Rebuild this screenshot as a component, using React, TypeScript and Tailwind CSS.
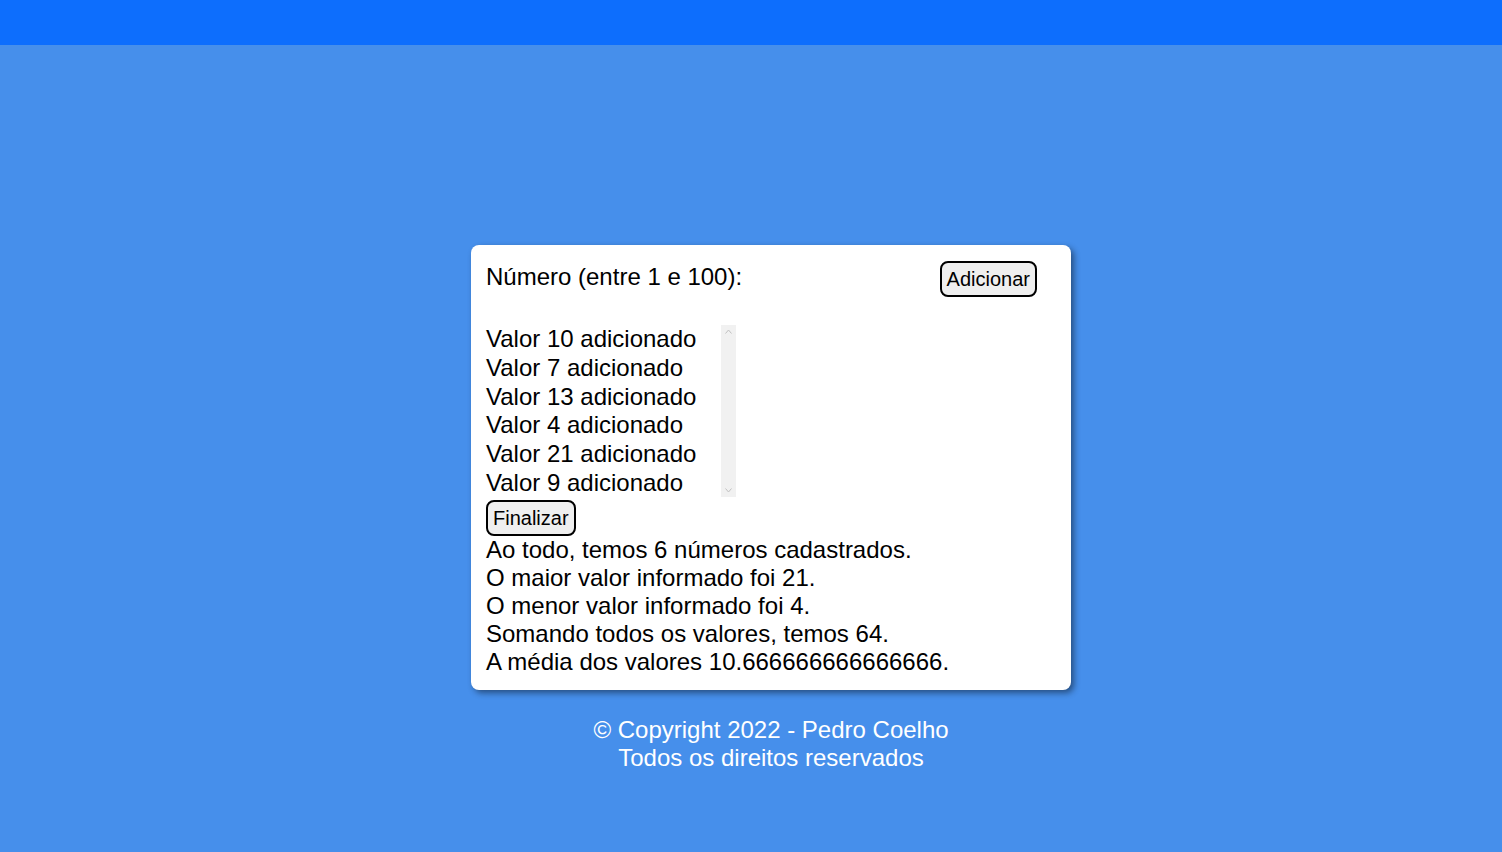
import React from "react";

const valores = [10, 7, 13, 4, 21, 9];

const Botao = ({ children }: { children: React.ReactNode }) => (
  <button className="h-[36px] px-[5px] border-2 border-black rounded-[8px] bg-[#efefef] text-[20px] leading-[24px] text-black">
    {children}
  </button>
);

export default function App() {
  const soma = valores.reduce((a, b) => a + b, 0);
  const media = soma / valores.length;

  return (
    <div className="min-h-[852px] bg-[#468feb] font-['Liberation_Sans',Arial,sans-serif] text-[24px]">
      <header className="h-[45px] bg-[#0d6efd]" />

      <main className="pt-[200px] pl-[40px]">
        <section className="w-[600px] mx-auto bg-white rounded-[8px] shadow-[3px_3px_6px_rgba(0,0,0,0.45)] px-[15px] pt-[15px] pb-[14px] text-black">
          <div className="flex items-start">
            <label className="leading-[34px]">Número (entre 1 e 100):</label>
            <div className="flex ml-auto mr-[19px] mt-[1px]">
              <Botao>Adicionar</Botao>
            </div>
          </div>

          {/* lista de valores, imita um select sem borda */}
          <div className="mt-[28px] flex w-[250px] h-[172px]">
            <div className="flex-1">
              {valores.map((v) => (
                <div key={v} className="h-[28.8px] leading-[28.8px]">
                  Valor {v} adicionado
                </div>
              ))}
            </div>
            <div className="w-[15px] bg-[#f1f1f1] flex flex-col justify-between items-center py-[2px]">
              <svg width="7" height="5" viewBox="0 0 7 5" className="mt-[2px]">
                <path d="M0.5 4.5 L3.5 1 L6.5 4.5" fill="none" stroke="#c1c1c1" strokeWidth="1" />
              </svg>
              <svg width="7" height="5" viewBox="0 0 7 5" className="mb-[2px]">
                <path d="M0.5 0.5 L3.5 4 L6.5 0.5" fill="none" stroke="#c1c1c1" strokeWidth="1" />
              </svg>
            </div>
          </div>

          <div className="flex mt-[3px]">
            <Botao>Finalizar</Botao>
          </div>

          <div className="leading-[28px]">
            <p>Ao todo, temos {valores.length} números cadastrados.</p>
            <p>O maior valor informado foi {Math.max(...valores)}.</p>
            <p>O menor valor informado foi {Math.min(...valores)}.</p>
            <p>Somando todos os valores, temos {soma}.</p>
            <p>A média dos valores {media}.</p>
          </div>
        </section>
      </main>

      <footer className="mt-[26px] pl-[40px] text-center text-white leading-[28px]">
        <p>© Copyright 2022 - Pedro Coelho</p>
        <p>Todos os direitos reservados</p>
      </footer>
    </div>
  );
}
